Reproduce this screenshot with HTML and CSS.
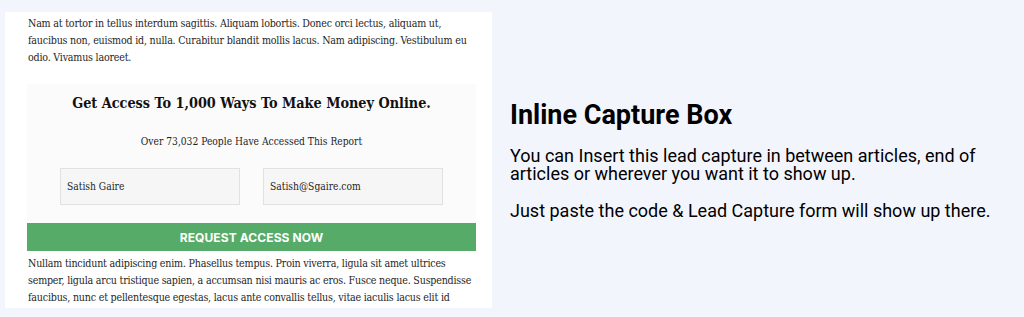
FILE: index.html
```html
<!DOCTYPE html>
<html lang="en">
<head>
    <meta charset="UTF-8">
    <meta name="viewport" content="width=device-width, initial-scale=1.0">
    <title>Inline Capture Box</title>
    <link rel="stylesheet" href="styles.css">
</head>
<body>
    <div class="pagina">
        <div class="articulo">
            <p class="texto">Nam at tortor in tellus interdum sagittis. Aliquam lobortis. Donec orci lectus, aliquam ut, faucibus non, euismod id, nulla. Curabitur blandit mollis lacus. Nam adipiscing. Vestibulum eu odio. Vivamus laoreet.</p>

            <div class="captura">
                <h2>Get Access To 1,000 Ways To Make Money Online.</h2>
                <p class="sub">Over 73,032 People Have Accessed This Report</p>
                <div class="campos">
                    <input type="text" value="Satish Gaire">
                    <input type="email" value="Satish@Sgaire.com">
                </div>
                <button type="button">REQUEST ACCESS NOW</button>
            </div>

            <p class="texto final">Nullam tincidunt adipiscing enim. Phasellus tempus. Proin viverra, ligula sit amet ultrices semper, ligula arcu tristique sapien, a accumsan nisi mauris ac eros. Fusce neque. Suspendisse faucibus, nunc et pellentesque egestas, lacus ante convallis tellus, vitae iaculis lacus elit id tortor. Vivamus aliquet elit ac nisl. Fusce fermentum odio nec arcu. Vivamus euismod mauris.</p>
        </div>

        <div class="info">
            <h1>Inline Capture Box</h1>
            <p>You can Insert this lead capture in between articles, end of articles or wherever you want it to show up.</p>
            <p>Just paste the code &amp; Lead Capture form will show up there.</p>
        </div>
    </div>
</body>
</html>
```

FILE: styles.css
```css
/* Pagina de ejemplo con la caja de captura */
body{
    margin: 0;
    background-color: #f3f5fd;
    font-family: Roboto, "Liberation Sans", sans-serif;
}

.pagina {
    display: flex;
    align-items: flex-start;
}

.articulo {
    width: 449px;
    height: 296px;
    margin: 12px 0 0 5px;
    padding: 0 16px 0 22px;
    background-color: #ffffff;
    overflow: hidden;
    font-family: "DejaVu Serif Condensed", "DejaVu Serif", serif;
    font-stretch: condensed;
    color: #262626;
}

.texto {
    margin: 0;
    font-size: 10.6px;
    letter-spacing: -0.2px;
    line-height: 17px;
    padding-left: 1px;
}

.articulo > .texto:first-child {
    padding-top: 3px;
}

.texto.final {
    margin-top: 4px;
}

.captura {
    margin-top: 18px;
    background-color: #fbfbfb;
    text-align: center;
}

.captura h2 {
    margin: 0;
    padding-top: 9px;
    font-size: 14.3px;
    line-height: 20px;
    color: #111111;
}

.sub {
    margin: 22px 0 0;
    font-size: 10.2px;
    line-height: 14px;
    color: #1e1e1e;
}

.campos {
    display: flex;
    justify-content: center;
    gap: 23px;
    margin-top: 19px;
}

.campos input {
    width: 180px;
    height: 37px;
    box-sizing: border-box;
    padding: 0 6px;
    border: 1px solid #e1e1e1;
    background-color: #f6f6f6;
    font-family: "DejaVu Serif Condensed", "DejaVu Serif", serif;
    font-stretch: condensed;
    font-size: 10.2px;
    color: #1e1e1e;
}

button{
    display: block;
    width: 100%;
    height: 28px;
    margin-top: 18px;
    background-color: #55ab67;
    color: white;
    border: none;
    font-family: Inter, "Open Sans", sans-serif;
    font-weight: 700;
    font-size: 12px;
    letter-spacing: 0.1px;
    cursor: pointer;
}

.info {
    margin-left: 18px;
    padding-top: 100px;
    color: #000000;
}

.info h1 {
    margin: 0;
    font-size: 27px;
    line-height: 30px;
    font-weight: 700;
}

.info p {
    margin: 17px 0 0;
    font-size: 18px;
    line-height: 18px;
    width: 495px;
}

.info p + p {
    margin-top: 19px;
}
```
